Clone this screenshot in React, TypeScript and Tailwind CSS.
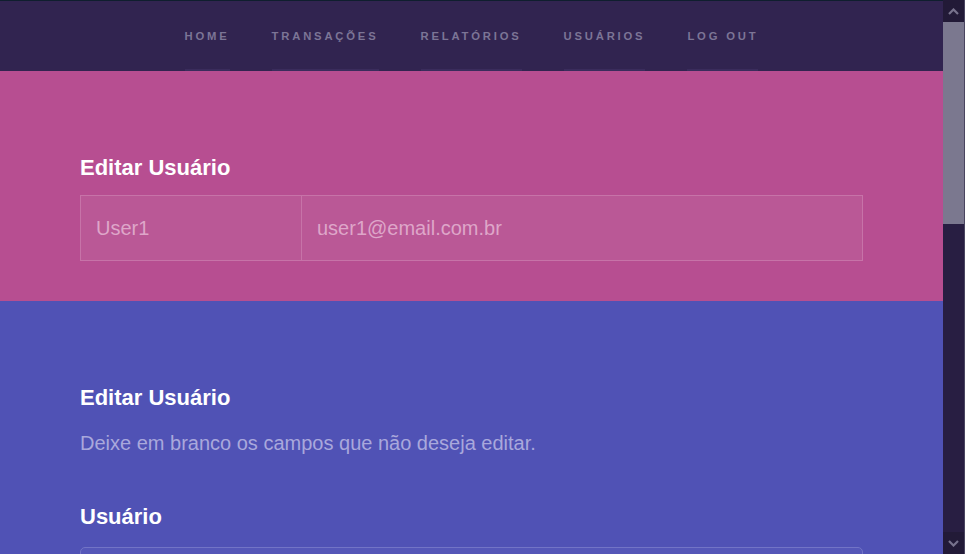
const navItems = ['Home', 'Transações', 'Relatórios', 'Usuários', 'Log out']

function Scrollbar() {
  return (
    <div className="flex w-[22px] shrink-0 flex-col border-r border-[#4a4560] bg-[#281e42]">
      <div className="flex h-[22px] items-center justify-center bg-[#221a37]">
        <svg width="11" height="7" viewBox="0 0 11 7">
          <path d="M1 6 L5.5 1.5 L10 6" fill="none" stroke="#77728c" strokeWidth="2.2" />
        </svg>
      </div>
      <div className="h-[202px] bg-[#7b788f]" />
      <div className="flex-1" />
      <div className="flex h-[22px] items-center justify-center bg-[#221a37]">
        <svg width="11" height="7" viewBox="0 0 11 7">
          <path d="M1 1 L5.5 5.5 L10 1" fill="none" stroke="#77728c" strokeWidth="2.2" />
        </svg>
      </div>
    </div>
  )
}

export default function App() {
  return (
    <div className="flex h-[554px] w-[965px] overflow-hidden font-['Liberation_Sans',Arial,sans-serif]">
      <div className="flex min-w-0 flex-1 flex-col">
        <nav className="flex h-[71px] shrink-0 items-stretch justify-center gap-[42px] border-t border-[#0f1e2e] bg-[#312450]">
          {navItems.map((item) => (
            <a
              key={item}
              className="relative flex items-center pl-[0.25em] pt-[1px] text-[11.25px] font-bold uppercase tracking-[0.25em] text-[#7c7596]"
            >
              <span className="-ml-[0.25em]">{item}</span>
              <span className="absolute bottom-0 left-0 right-0 h-[2px] bg-[#3a2c5c]" />
            </a>
          ))}
        </nav>

        <section className="shrink-0 bg-[#b74e91] px-20 pb-10 pt-20">
          <h3 className="mb-[11px] text-[22px] font-bold leading-[1.5] text-white">Editar Usuário</h3>
          <div className="flex h-[66px] border border-[#c773a8] bg-[#ba5896] text-[20px] text-[#dea6c9]">
            <div className="flex w-[221px] items-center border-r border-[#c773a8] px-[15px]">User1</div>
            <div className="flex flex-1 items-center px-[15px]">user1@email.com.br</div>
          </div>
        </section>

        <section className="flex-1 bg-[#5052b5] px-20 pt-20">
          <h3 className="text-[22px] font-bold leading-[1.5] text-white">Editar Usuário</h3>
          <p className="mt-[14px] text-[20px] leading-[1.5] text-[#a9a8dc]">
            Deixe em branco os campos que não deseja editar.
          </p>
          <h3 className="mt-[42px] text-[22px] font-bold leading-[1.5] text-white">Usuário</h3>
          <div className="mt-[14px] h-[44px] rounded-[5px] border border-[#7274c6] bg-[#5557b8]" />
        </section>
      </div>
      <Scrollbar />
    </div>
  )
}
